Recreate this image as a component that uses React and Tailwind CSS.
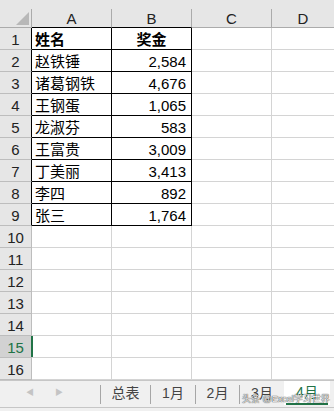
import React from 'react';

const data = [
  ['姓名', '奖金'],
  ['赵铁锤', '2,584'],
  ['诸葛钢铁', '4,676'],
  ['王钢蛋', '1,065'],
  ['龙淑芬', '583'],
  ['王富贵', '3,009'],
  ['丁美丽', '3,413'],
  ['李四', '892'],
  ['张三', '1,764'],
];

const font = { fontFamily: '"Liberation Sans", "Noto Sans CJK SC", sans-serif' };

const Row = ({ n }) => {
  const inData = n <= 9;
  const cells = data[n - 1];
  const selected = n === 15;
  return (
    <div className="flex h-[22px]">
      <div
        className={`relative w-[32px] shrink-0 flex items-center justify-center border-b border-b-[#bdbdbd] border-r text-[15px] leading-none pt-[2px] ${
          inData ? 'border-r-black' : 'border-r-[#bdbdbd]'
        } ${selected ? 'bg-[#d2d2d2] text-[#217346]' : 'bg-[#e6e6e6] text-[#222]'}`}
      >
        {n}
        {selected && <div className="absolute right-[-2px] top-0 bottom-0 w-[2px] bg-[#217346]" />}
      </div>
      <div
        className={`w-[80px] shrink-0 flex items-center pl-[3px] pt-[2px] border-r border-b text-[15px] leading-none ${
          inData ? 'border-black' : 'border-[#d4d4d4]'
        } ${n === 1 ? 'font-bold' : ''}`}
      >
        {cells && cells[0]}
      </div>
      <div
        className={`w-[80px] shrink-0 flex items-center pt-[2px] border-r border-b text-[15px] leading-none ${
          inData ? 'border-black' : 'border-[#d4d4d4]'
        } ${n === 1 ? 'justify-center font-bold' : 'justify-end pr-[5px]'}`}
      >
        {cells && cells[1]}
      </div>
      <div className="w-[80px] shrink-0 border-r border-b border-[#d4d4d4]" />
      <div className="flex-1 border-b border-[#d4d4d4]" />
    </div>
  );
};

const Tab = ({ label, w }) => (
  <div className={`${w} shrink-0 h-full flex items-center justify-center text-[14px] text-[#444] leading-none pb-[3px]`}>
    {label}
  </div>
);

const Sep = () => <div className="w-px shrink-0 h-[19px] bg-[#a6a6a6] self-center" />;

export default function App() {
  return (
    <div className="w-[334px] h-[411px] overflow-hidden bg-white text-black" style={font}>
      {/* column headers */}
      <div className="flex items-end h-[28px] bg-[#e6e6e6]">
        <div className="relative w-[32px] h-[19px] shrink-0 border-r border-b border-[#ababab]">
          <svg className="absolute right-[2px] bottom-[2px]" width="13" height="13" viewBox="0 0 13 13">
            <polygon points="13,0 13,13 0,13" fill="#b8b8b8" />
          </svg>
        </div>
        <div className="w-[80px] h-[19px] shrink-0 flex items-center justify-center border-r border-r-[#ababab] border-b border-b-black text-[15px] text-[#222] leading-none pt-[1px]">
          A
        </div>
        <div className="w-[80px] h-[19px] shrink-0 flex items-center justify-center border-r border-r-[#ababab] border-b border-b-black text-[15px] text-[#222] leading-none pt-[1px]">
          B
        </div>
        <div className="w-[80px] h-[19px] shrink-0 flex items-center justify-center border-r border-b border-[#ababab] text-[15px] text-[#222] leading-none pt-[1px]">
          C
        </div>
        <div className="flex-1 h-[19px] flex items-center justify-center border-b border-[#ababab] text-[15px] text-[#222] leading-none pt-[1px]">
          D
        </div>
      </div>

      {Array.from({ length: 16 }, (_, i) => (
        <Row key={i} n={i + 1} />
      ))}

      {/* sheet tabs */}
      <div className="relative h-[31px] bg-[#f0f0f0] border-t border-[#c6c6c6]">
        <div className="flex h-[27px] border-b border-[#c6c6c6]">
          <div className="w-[100px] shrink-0 flex items-center pb-[3px] text-[#c4c4c4] text-[8px]">
            <span className="ml-[26px]">◀</span>
            <span className="ml-[21px]">▶</span>
          </div>
          <Sep />
          <Tab label="总表" w="w-[49px]" />
          <Sep />
          <Tab label="1月" w="w-[44px]" />
          <Sep />
          <Tab label="2月" w="w-[43px]" />
          <Sep />
          <Tab label="3月" w="w-[44px]" />
          <div className="w-[46px] shrink-0 h-[24px] bg-white flex flex-col">
            <div className="flex-1 flex items-center justify-center text-[14px] text-[#217346] leading-none">4月</div>
            <div className="h-[2px] mx-[2px] bg-[#217346]" />
          </div>
        </div>
        <div className="absolute left-[242px] top-[14px] text-[9px] leading-none text-[#f4f4f4] whitespace-nowrap [text-shadow:0_0_1px_#333,0_0_1px_#333]">
          头条 @Excel学习世界
        </div>
      </div>
    </div>
  );
}
